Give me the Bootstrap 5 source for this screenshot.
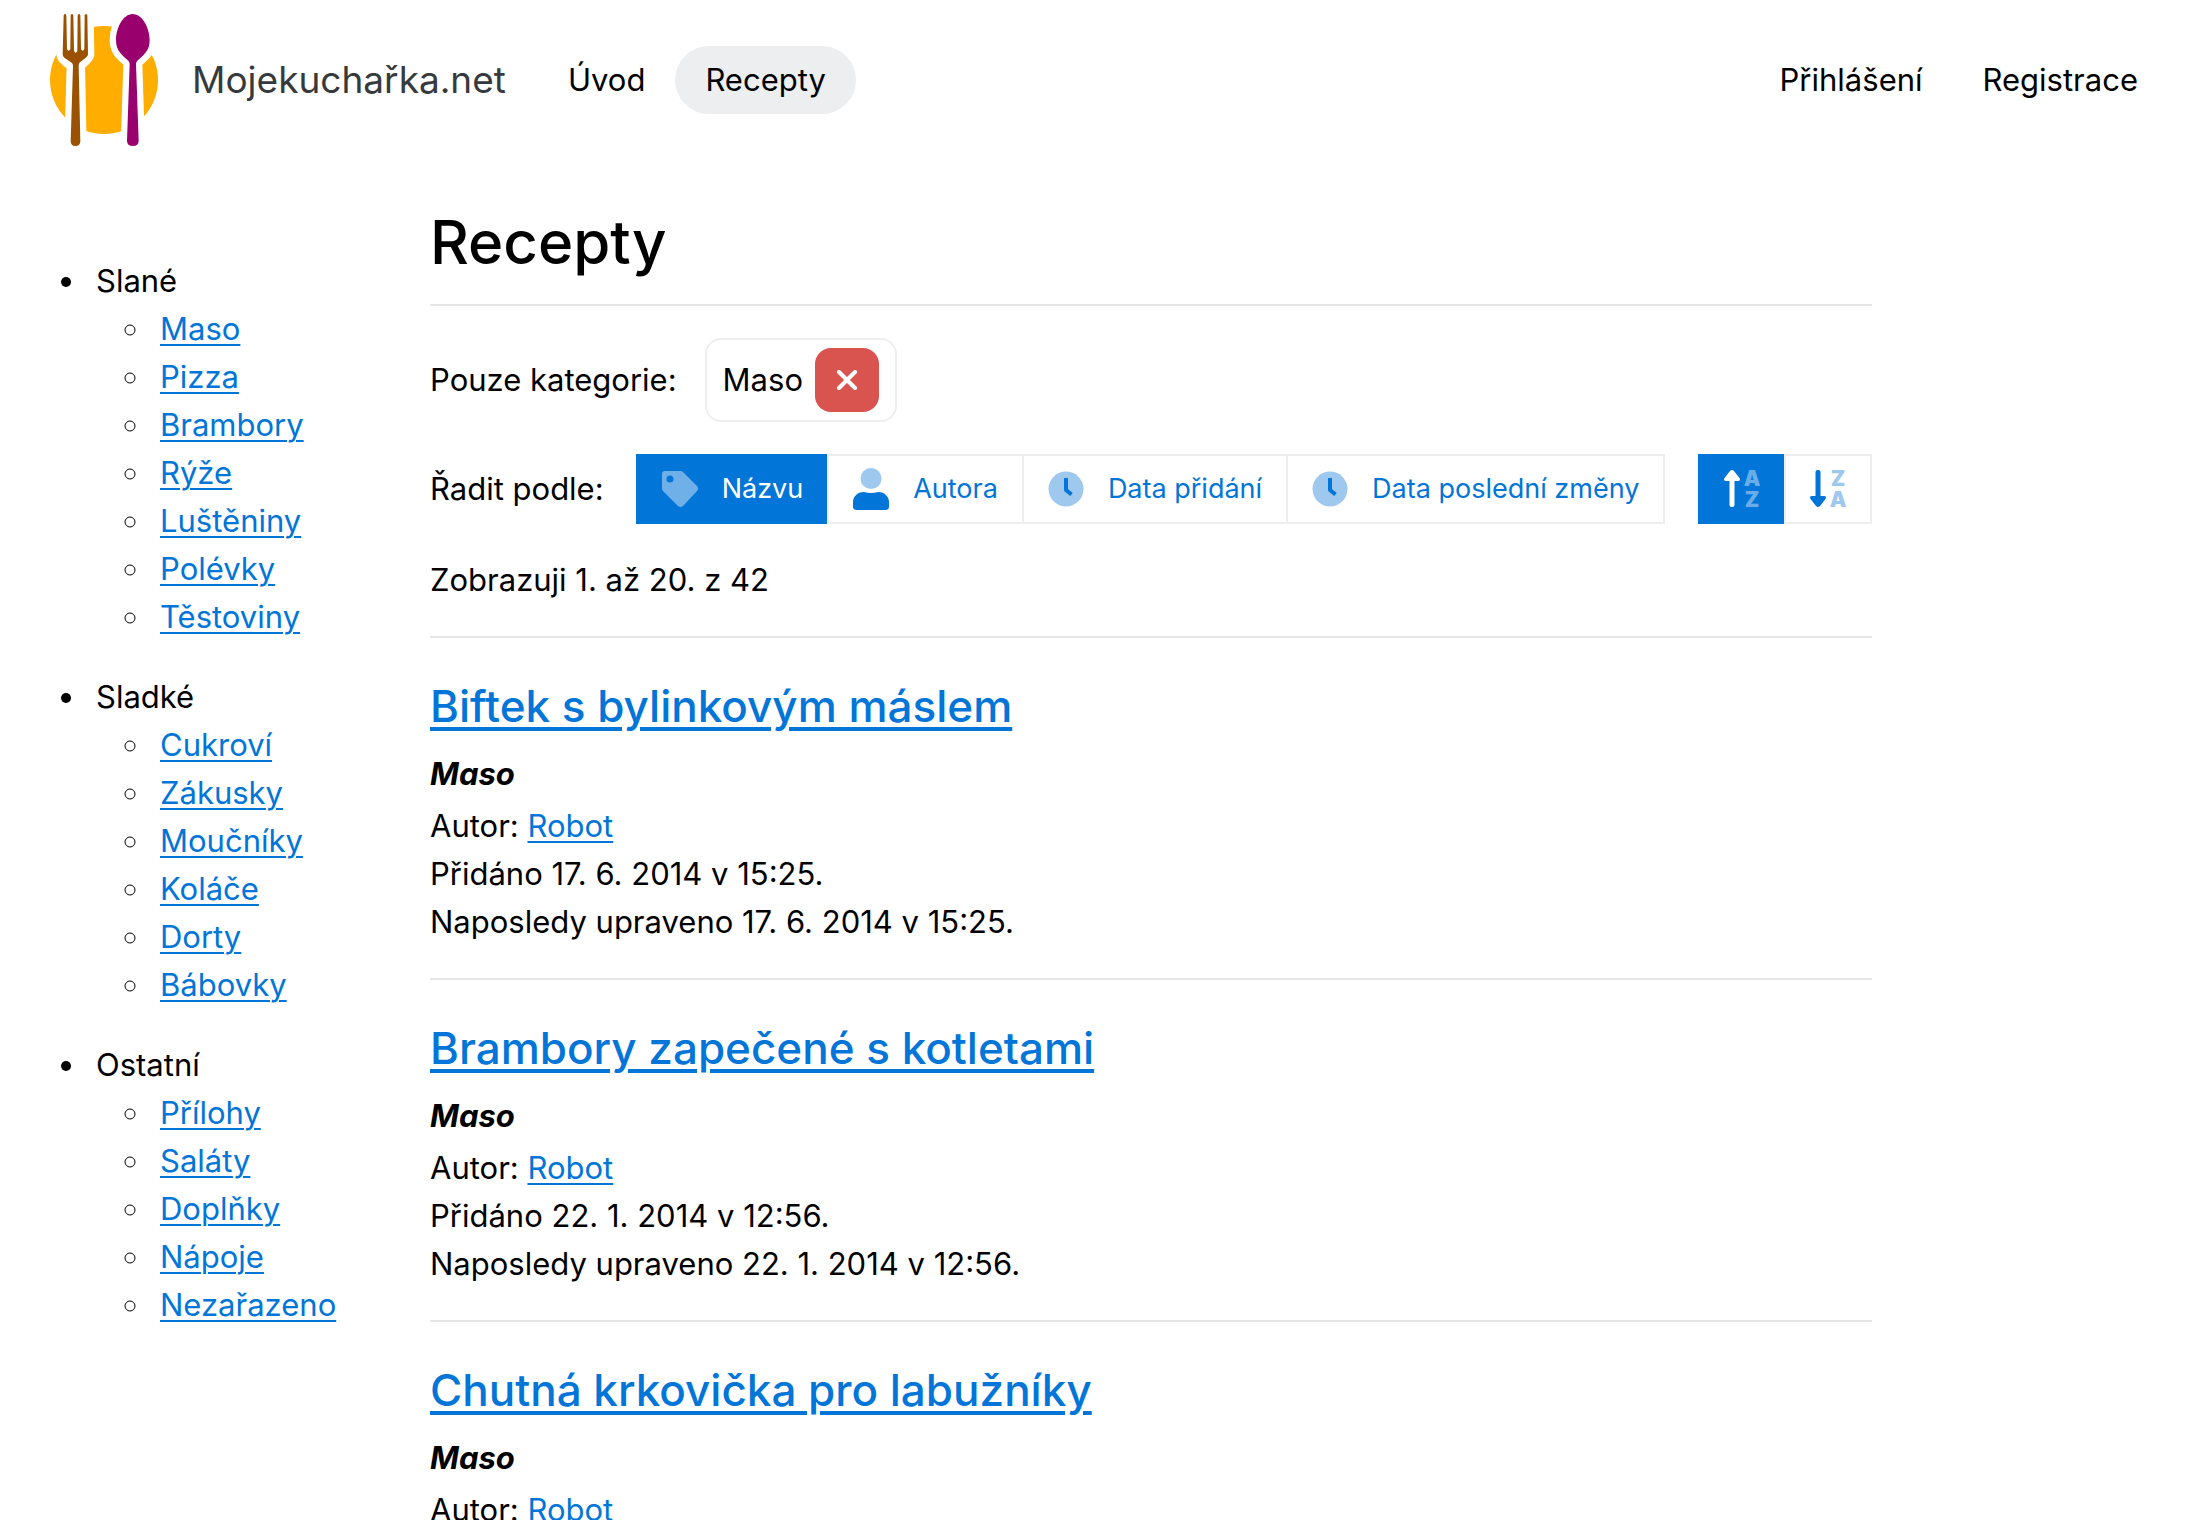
<!DOCTYPE html>
<html lang="cs">
<head>
<meta charset="utf-8">
<meta name="viewport" content="width=device-width, initial-scale=1">
<title>Recepty – Mojekuchařka.net</title>
<link href="https://cdn.jsdelivr.net/npm/bootstrap@5.3.0/dist/css/bootstrap.min.css" rel="stylesheet">
<style>
  body { font-family: Inter, "Liberation Sans", sans-serif; font-size: 31px; line-height: 48px; color: #000; background: #fff; }
  a { color: #0275d8; text-decoration-thickness: 2px; text-underline-offset: 4px; }
  .site-nav { padding: 14px 32px; }
  .site-nav .navbar-brand { gap: 34px; padding: 0 0 0 18px; margin-right: 32px; font-size: 37px; color: #373a3c; }
  .site-nav .navbar-nav .nav-link { padding: 10px 30px; color: #000; border-radius: 34px; }
  .site-nav .navbar-nav .nav-link.active { background: #eceeef; color: #000; }
  .layout { gap: 32px; padding: 46px 32px 0; }
  .categories { flex: 0 0 366px; margin-top: 51px; }
  .categories ul { padding-left: 56px; margin: 0; }
  .categories li { padding-left: 8px; }
  .categories > ul > li { margin-bottom: 32px; }
  .recipes { flex: 0 1 1442px; min-width: 0; }
  hr { border-top: 2px solid #e5e5e5; opacity: 1; margin: 32px 0; }
  h1 { font-size: 60px; line-height: 72px; font-weight: 500; margin: 0 0 26px; }
  h1 + hr { margin-top: 0; }
  .filter-row { gap: 28px; margin-bottom: 32px; }
  .sorting { gap: 32px; }
  .filter-chip { gap: 12px; padding: 8px 16px; border: 2px solid #eceeef; border-radius: 16px; }
  .btn-remove { width: 64px; height: 64px; border-radius: 16px; background: #d9534f; }
  .btn-remove:hover { background: #c9302c; }
  .btn-sort { --bs-btn-color: #0275d8; --bs-btn-bg: #fff; --bs-btn-border-color: #eceeef; --bs-btn-border-width: 2px;
    --bs-btn-hover-color: #0275d8; --bs-btn-hover-bg: #f7f7f9; --bs-btn-hover-border-color: #eceeef;
    --bs-btn-active-color: #fff; --bs-btn-active-bg: #0275d8; --bs-btn-active-border-color: #0275d8;
    --bs-btn-border-radius: 0; --bs-btn-padding-x: 24px; --bs-btn-padding-y: 12px; --bs-btn-font-size: 27px; --bs-btn-line-height: 42px;
    display: flex; align-items: center; gap: 24px; white-space: nowrap; flex: none; }
  .sorting .btn-group > .btn-sort:not(:first-child) { margin-left: -2px; }
  .sorting .btn-group > .btn-sort.active { z-index: 0; }
  .btn-sort svg { flex: none; overflow: visible; }
  .recipe h2 { font-size: 44px; line-height: 72px; font-weight: 500; margin: 0 0 8px; }
  .recipe h2 a { text-decoration-thickness: 4px; text-underline-offset: 5px; }
  .recipe .kind { font-weight: 700; font-style: italic; margin: 0 0 4px; }
</style>
</head>
<body>
<header class="navbar navbar-expand site-nav">
  <a class="navbar-brand d-flex align-items-center" href="#">
    <svg width="108" height="132" viewBox="60 42 324 396" aria-hidden="true">
      <circle cx="222" cy="240" r="162" fill="#ffae00"/>
      <g fill="#fff" stroke="#fff" stroke-width="38" stroke-linejoin="round">
        <path d="M101 42H172L174 165Q174 171 146 195L151 438H122L129 195Q98 175 98 165Z"/>
        <path d="M308 42C337 42 359 84 359 120C359 152 342 164 322 182Q318 186 318 192L326 438H291L299 192Q299 186 295 182C275 164 258 152 258 120C258 84 279 42 308 42Z"/>
      </g>
      <path fill="#9a5200" d="M101 46Q105 38 109 46L111 147Q116 157 121 147L122 46Q126 38 130 46L132 153Q137 163 142 153L143 46Q147 38 151 46L153 147Q158 157 163 147L164 46Q168 38 172 46L174 163Q174 168 169 172L150 187Q146 191 146 197L151 424Q151 438 136.500 438Q122 438 122 424L129 197Q129 191 125 188L103 173Q98 169 98 163Z"/>
      <path fill="#99006e" d="M308 42C337 42 359 84 359 120C359 152 342 164 322 182Q318 186 318 192L326 422Q326 438 308.500 438Q291 438 291 422L299 192Q299 186 295 182C275 164 258 152 258 120C258 84 279 42 308 42Z"/>
    </svg>
    <span>Mojekuchařka.net</span>
  </a>
  <nav class="d-flex flex-grow-1" aria-label="Hlavní">
    <ul class="navbar-nav">
      <li class="nav-item"><a class="nav-link" href="#">Úvod</a></li>
      <li class="nav-item"><a class="nav-link active" aria-current="page" href="#">Recepty</a></li>
    </ul>
    <ul class="navbar-nav ms-auto">
      <li class="nav-item"><a class="nav-link" href="#">Přihlášení</a></li>
      <li class="nav-item"><a class="nav-link" href="#">Registrace</a></li>
    </ul>
  </nav>
</header>

<div class="layout d-flex align-items-start">
  <aside class="categories">
    <ul>
      <li>Slané
        <ul>
          <li><a href="#">Maso</a></li>
          <li><a href="#">Pizza</a></li>
          <li><a href="#">Brambory</a></li>
          <li><a href="#">Rýže</a></li>
          <li><a href="#">Luštěniny</a></li>
          <li><a href="#">Polévky</a></li>
          <li><a href="#">Těstoviny</a></li>
        </ul>
      </li>
      <li>Sladké
        <ul>
          <li><a href="#">Cukroví</a></li>
          <li><a href="#">Zákusky</a></li>
          <li><a href="#">Moučníky</a></li>
          <li><a href="#">Koláče</a></li>
          <li><a href="#">Dorty</a></li>
          <li><a href="#">Bábovky</a></li>
        </ul>
      </li>
      <li>Ostatní
        <ul>
          <li><a href="#">Přílohy</a></li>
          <li><a href="#">Saláty</a></li>
          <li><a href="#">Doplňky</a></li>
          <li><a href="#">Nápoje</a></li>
          <li><a href="#">Nezařazeno</a></li>
        </ul>
      </li>
    </ul>
  </aside>

  <main class="recipes">
    <h1>Recepty</h1>
    <hr>
    <div class="filter-row d-flex align-items-center">
      <span>Pouze kategorie:</span>
      <div class="filter-chip d-flex align-items-center">
        <span>Maso</span>
        <button type="button" class="btn btn-remove border-0 p-0 d-flex align-items-center justify-content-center" aria-label="Zrušit kategorii Maso">
          <svg width="20" height="20" viewBox="0 0 20 20" fill="none" stroke="#fff" stroke-width="4" stroke-linecap="round" aria-hidden="true"><path d="M2 2L18 18M18 2L2 18"/></svg>
        </button>
      </div>
    </div>
    <div class="filter-row sorting d-flex align-items-center">
      <span class="text-nowrap">Řadit podle:</span>
      <div class="btn-group" role="group" aria-label="Řadit podle">
        <button type="button" class="btn btn-sort active" aria-pressed="true">
          <svg width="36" height="42" viewBox="0 0 36 42" aria-hidden="true"><path fill="#fff" fill-opacity=".43" fill-rule="evenodd" d="M3 3H18Q20 3 21 4L35 18Q37 20.500 35 23L21 38Q18.500 40 16 38L1 23Q0 22 0 20V6Q0 3 3 3ZM8 7.500A3.500 3.500 0 1 0 8 14.500A3.500 3.500 0 1 0 8 7.500Z"/></svg>
          Názvu
        </button>
        <button type="button" class="btn btn-sort" aria-pressed="false">
          <svg width="36" height="42" viewBox="0 0 36 42" aria-hidden="true"><circle cx="18" cy="10.500" r="10.500" fill="#9fc8ef"/><path fill="#0275d8" d="M11 24Q18 26 25 24C32 24 36 29 36 34V38.500Q36 42 32.500 42H3.500Q0 42 0 38.500V34C0 29 4 24 11 24Z"/></svg>
          Autora
        </button>
        <button type="button" class="btn btn-sort" aria-pressed="false">
          <svg width="36" height="42" viewBox="0 0 36 42" aria-hidden="true"><circle cx="18" cy="21" r="17.500" fill="#9fc8ef"/><path fill="none" stroke="#0275d8" stroke-width="4" stroke-linejoin="round" d="M18 10V22L23.500 26.500"/></svg>
          Data přidání
        </button>
        <button type="button" class="btn btn-sort" aria-pressed="false">
          <svg width="36" height="42" viewBox="0 0 36 42" aria-hidden="true"><circle cx="18" cy="21" r="17.500" fill="#9fc8ef"/><path fill="none" stroke="#0275d8" stroke-width="4" stroke-linejoin="round" d="M18 10V22L23.500 26.500"/></svg>
          Data poslední změny
        </button>
      </div>
      <div class="btn-group ms-auto" role="group" aria-label="Směr řazení">
        <button type="button" class="btn btn-sort active" aria-pressed="true" aria-label="Vzestupně">
          <svg width="36" height="42" viewBox="0 0 36 42" font-family="Inter, sans-serif" font-weight="900" font-size="21" text-anchor="middle" aria-hidden="true"><path fill="#fff" d="M8 2Q9 2 10 3L15.500 10Q17 13 14 13H10.500V37Q10.500 39 8.500 39H7.500Q5.500 39 5.500 37V13H2Q-1 13 .5 10L6 3Q7 2 8 2Z"/><g fill="#fff" fill-opacity=".43"><text x="28" y="18">A</text><text x="28" y="39">Z</text></g></svg>
        </button>
        <button type="button" class="btn btn-sort" aria-pressed="false" aria-label="Sestupně">
          <svg width="36" height="42" viewBox="0 0 36 42" font-family="Inter, sans-serif" font-weight="900" font-size="21" text-anchor="middle" aria-hidden="true"><path fill="#0275d8" d="M8 39Q9 39 10 38L15.500 31Q17 28 14 28H10.500V4Q10.500 2 8.500 2H7.500Q5.500 2 5.500 4V28H2Q-1 28 .5 31L6 38Q7 39 8 39Z"/><g fill="#9fc8ef"><text x="28" y="18">Z</text><text x="28" y="39">A</text></g></svg>
        </button>
      </div>
    </div>
    <p class="m-0">Zobrazuji 1. až 20. z 42</p>
    <hr>
    <article class="recipe">
      <h2><a href="#">Biftek s bylinkovým máslem</a></h2>
      <p class="kind">Maso</p>
      <div>Autor: <a href="#">Robot</a></div>
      <div>Přidáno 17. 6. 2014 v 15:25.</div>
      <div>Naposledy upraveno 17. 6. 2014 v 15:25.</div>
    </article>
    <hr>
    <article class="recipe">
      <h2><a href="#">Brambory zapečené s kotletami</a></h2>
      <p class="kind">Maso</p>
      <div>Autor: <a href="#">Robot</a></div>
      <div>Přidáno 22. 1. 2014 v 12:56.</div>
      <div>Naposledy upraveno 22. 1. 2014 v 12:56.</div>
    </article>
    <hr>
    <article class="recipe">
      <h2><a href="#">Chutná krkovička pro labužníky</a></h2>
      <p class="kind">Maso</p>
      <div>Autor: <a href="#">Robot</a></div>
    </article>
  </main>
</div>
<script src="https://cdn.jsdelivr.net/npm/bootstrap@5.3.0/dist/js/bootstrap.bundle.min.js"></script>
</body>
</html>
